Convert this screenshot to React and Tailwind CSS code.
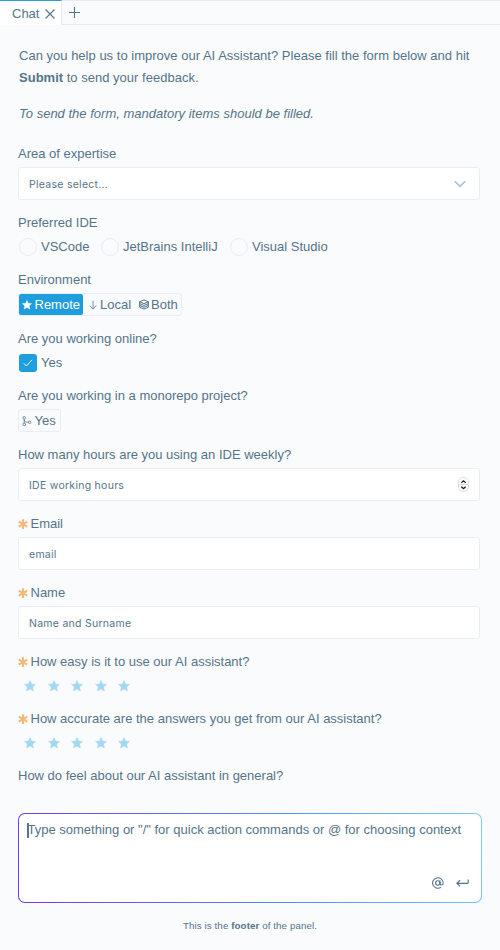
const StarIcon = ({ className }) => (
  <svg viewBox="0 0 12 12" className={className} fill="currentColor" stroke="currentColor" strokeWidth="0.8" strokeLinejoin="round">
    <path d="M6 .8 7.5 4.2 11.3 4.5 8.4 7 9.3 10.8 6 8.8 2.7 10.8 3.6 7 .7 4.5 4.5 4.2Z" />
  </svg>
);

const Asterisk = () => (
  <svg viewBox="0 0 10 10" className="mr-[2.5px] size-[10px] shrink-0 overflow-visible" stroke="#f3b978" strokeWidth="2.1" strokeLinecap="butt">
    <path d="M5 .2V10M.7 2.6 9.3 7.6M9.3 2.6 .7 7.6" />
  </svg>
);

const Field = ({ label, mandatory, children }) => (
  <div className="mb-[14px]">
    <div className="mb-1 flex h-[18px] items-center whitespace-nowrap">
      {mandatory && <Asterisk />}
      <span>{label}</span>
    </div>
    {children}
  </div>
);

const Box = ({ text, children }) => (
  <div className="flex h-[33px] w-[462px] items-center justify-between rounded-[3px] border border-[#e8eef3] bg-white pl-[10px] font-[Inter,sans-serif] text-[10.5px] tracking-[0.27px]">
    <span className="pt-[2px]">{text}</span>
    {children}
  </div>
);

const Radio = ({ text, className }) => (
  <div className={`flex items-center ${className}`}>
    <span className="mr-1 size-[18px] rounded-full border border-[#e8edf1]" />
    <span>{text}</span>
  </div>
);

const Stars = () => (
  <div className="flex h-[21px] items-center gap-[11.5px] pl-[6px] text-[#a1d8f1]">
    {[0, 1, 2, 3, 4].map((i) => (
      <StarIcon key={i} className="size-3" />
    ))}
  </div>
);

export default function App() {
  return (
    <div className="flex h-[950px] w-[500px] flex-col overflow-hidden bg-[#fafbfd] font-['Liberation_Sans',Arial,sans-serif] text-[13px] leading-[18px] text-[#557489]">
      <header className="flex h-[25px] shrink-0">
        <div className="flex w-[62px] items-center border-t border-r border-t-[#2a9fd9] border-r-[#e5ebf0] bg-white pl-3">
          <span className="w-[32px] pt-[2px]">Chat</span>
          <svg viewBox="0 0 12 12" className="mt-[2px] size-3" stroke="currentColor" strokeWidth="1.1">
            <path d="M1.5 1.5 10.5 10.5M10.5 1.5 1.5 10.5" />
          </svg>
        </div>
        <div className="flex-1 border-y border-[#e5ebf0] pt-[5px] pl-[6px]">
          <svg viewBox="0 0 13 13" className="size-[13px]" stroke="currentColor" strokeWidth="1.1">
            <path d="M6.5 1V12M1 6.5H12" />
          </svg>
        </div>
      </header>

      <main className="h-[788px] shrink-0 pl-[18px]">
        <div className="pt-5 pl-px leading-[22px] whitespace-nowrap">
          <p className="tracking-[0.012px]">
            Can you help us to improve our AI Assistant? Please fill the form below and hit
            <br />
            <b>Submit</b> to send your feedback.
          </p>
          <p className="mt-[14px] tracking-[0.012px] italic">To send the form, mandatory items should be filled.</p>
        </div>

        <div className="pt-5">
          <Field label="Area of expertise">
            <Box text="Please select...">
              <svg viewBox="0 0 12 8" className="mr-[13px] h-2 w-3" fill="none" stroke="#a9c2d3" strokeWidth="1.6">
                <path d="M.7 1.2 6 6.4 11.3 1.2" />
              </svg>
            </Box>
          </Field>
          <Field label="Preferred IDE">
            <div className="flex h-[21px] items-center pl-px">
              <Radio text="VSCode" className="w-[82px]" />
              <Radio text="JetBrains IntelliJ" className="w-[129px]" />
              <Radio text="Visual Studio" className="" />
            </div>
          </Field>
          <Field label="Environment">
            <div className="flex h-[23px] w-[164px] rounded-[3px] border border-[#e8eef3]">
              <div className="flex w-16 items-center rounded-[2px] bg-[#1f9edd] pl-[3px] text-white">
                <StarIcon className="mr-[2.5px] size-[10px]" />
                <span>Remote</span>
              </div>
              <div className="flex w-[51px] items-center pl-[5px]">
                <svg viewBox="0 0 10 10" className="mr-[2px] size-[10px]" fill="none" stroke="currentColor" strokeWidth="0.8">
                  <path d="M5 .8V9M1.7 5.6 5 9 8.3 5.6" />
                </svg>
                <span>Local</span>
              </div>
              <div className="flex items-center pl-[5px]">
                <svg viewBox="0 0 10 11" className="mr-[2px] h-[11px] w-[10px]" fill="none" stroke="currentColor" strokeWidth="1" strokeLinejoin="round">
                  <path d="M5 .9 9.4 2.8 5 4.7.6 2.8ZM.6 2.8V8.2L5 10.1 9.4 8.2V2.8M.6 4.6 5 6.5 9.4 4.6M.6 6.4 5 8.3 9.4 6.4" />
                </svg>
                <span>Both</span>
              </div>
            </div>
          </Field>
          <Field label="Are you working online?">
            <div className="flex h-[21px] items-center pl-px">
              <span className="mr-1 flex size-[18px] items-center justify-center rounded-[3px] bg-[#1f9edd]">
                <svg viewBox="0 0 10 8" className="h-2 w-[10px]" fill="none" stroke="#fff" strokeWidth="0.9">
                  <path d="M.8 4.3 3.4 7 9 .8" />
                </svg>
              </span>
              <span>Yes</span>
            </div>
          </Field>
          <Field label="Are you working in a monorepo project?">
            <div className="flex h-[23px] w-[43px] items-center rounded-[3px] border border-[#e8eef3] pl-[3px]">
              <svg viewBox="0 0 10 10" className="mr-[2.5px] size-[10px]" fill="none" stroke="currentColor" strokeWidth="0.8">
                <circle cx="2.2" cy="1.8" r="1.3" />
                <circle cx="2.2" cy="8.4" r="1.3" />
                <circle cx="7.6" cy="6.3" r="1.3" />
                <path d="M2.2 3.1V7.1M2.2 4C2.4 5.7 4 6.3 6.3 6.3" />
              </svg>
              <span>Yes</span>
            </div>
          </Field>
          <Field label="How many hours are you using an IDE weekly?">
            <Box text="IDE working hours">
              <span className="mr-[10px] flex h-[15px] w-[11px] items-center justify-center rounded-[5px] border border-[#dcdcdc] bg-white">
                <svg viewBox="0 0 9 13" className="h-[13px] w-[9px] shrink-0" fill="none">
                  <path d="M0 6.5H9" stroke="#d4d4d4" strokeWidth="0.8" />
                  <path d="M2.3 4.7 4.5 2.8 6.7 4.7M2.3 8.7 4.5 10.6 6.7 8.7" stroke="#222" strokeWidth="1.3" />
                </svg>
              </span>
            </Box>
          </Field>
          <Field label="Email" mandatory>
            <Box text="email" />
          </Field>
          <Field label="Name" mandatory>
            <Box text="Name and Surname" />
          </Field>
          <Field label="How easy is it to use our AI assistant?" mandatory>
            <Stars />
          </Field>
          <Field label="How accurate are the answers you get from our AI assistant?" mandatory>
            <Stars />
          </Field>
          <Field label="How do feel about our AI assistant in general?" />
        </div>
      </main>

      <div className="mx-[18px] h-[90px] w-[464px] shrink-0 rounded-[7px] bg-linear-[75deg,#7337e4_0%,#4d8cf5_55%,#78cdf8_100%] p-px">
        <div className="flex h-full flex-col justify-between rounded-[6px] bg-white pt-[7px] pl-2">
          <div className="flex items-center whitespace-nowrap">
            <span className="-mr-px h-[15px] w-[1.5px] bg-[#557489]" />
            <span>Type something or "/" for quick action commands or @ for choosing context</span>
          </div>
          <div className="flex items-center justify-end gap-[12px] pr-3 pb-[13px]">
            <svg viewBox="0 0 12 12" className="size-3" fill="none" stroke="currentColor" strokeWidth="1.1" strokeLinecap="round">
              <circle cx="5.8" cy="6" r="2.2" />
              <path d="M8 3.8V6.6C8 8.6 11.2 8.6 11.2 5.8A5.3 5.2 0 1 0 8.6 10.5" />
            </svg>
            <svg viewBox="0 0 13 10" className="h-[10px] w-[13px]" fill="none" stroke="currentColor" strokeWidth="1.2">
              <path d="M4 2.3.9 5.3 4 8.3M1 5.3H11.2Q12.2 5.3 12.2 4.3V1.5" />
            </svg>
          </div>
        </div>
      </div>

      <footer className="pt-[14px] text-center text-[9.75px] tracking-[0.09px]">
        This is the <b>footer</b> of the panel.
      </footer>
    </div>
  );
}
